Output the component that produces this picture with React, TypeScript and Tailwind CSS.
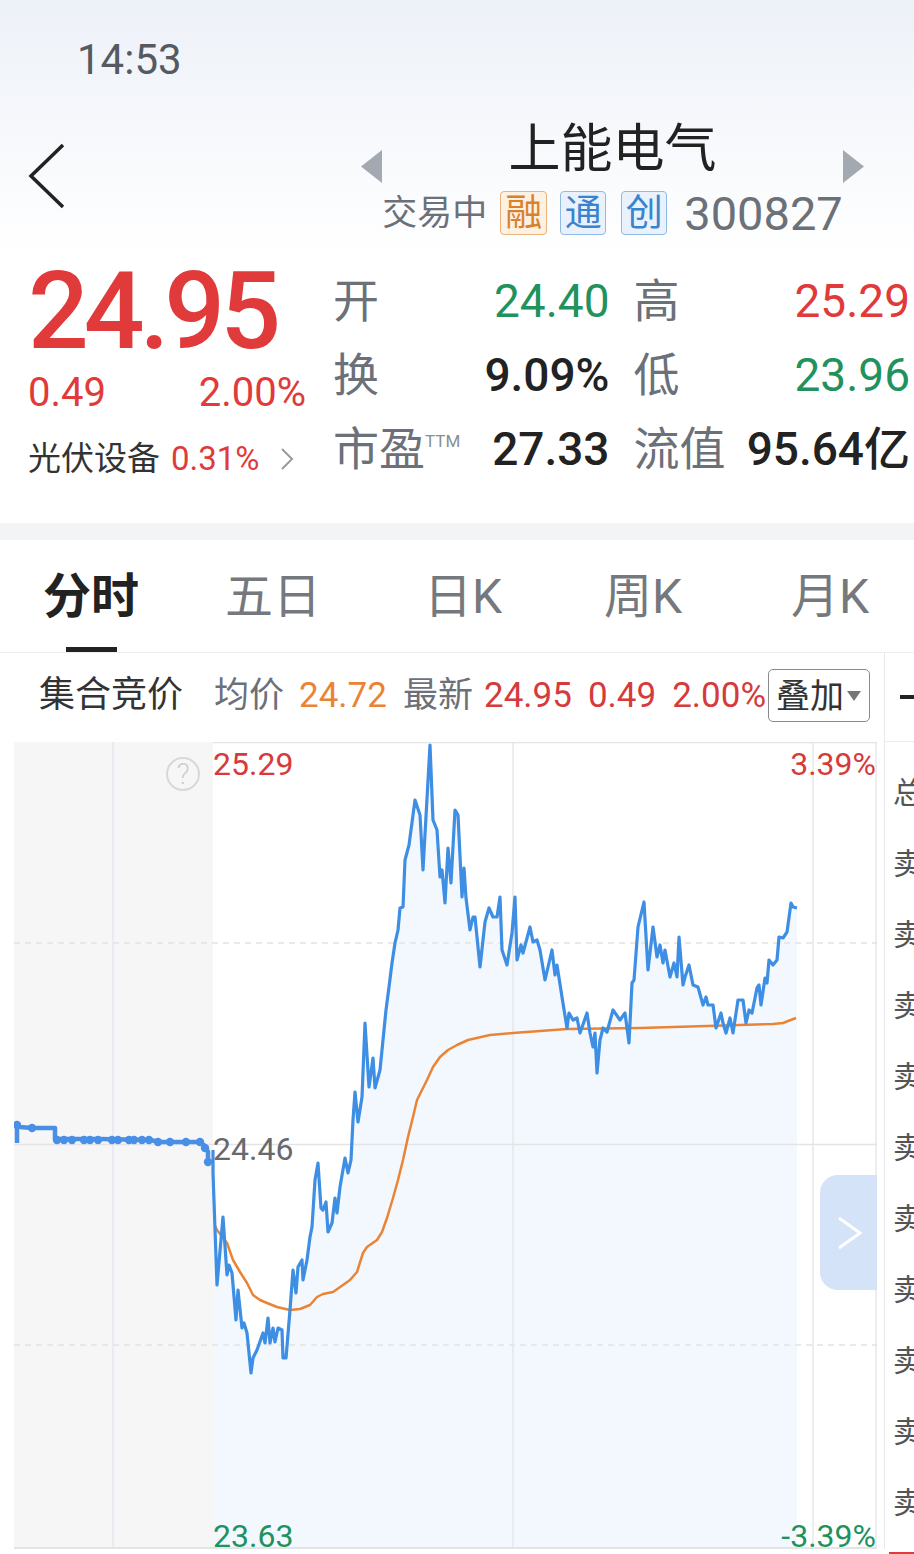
const price: [number, number][] = [
  [213, 1150], [213, 1173], [217, 1285], [223, 1217], [227, 1275], [229, 1265], [232, 1273], [236, 1320], [238, 1290],
  [242, 1328], [244, 1323], [247, 1333], [251, 1373], [253, 1358], [257, 1350], [263, 1333], [265, 1343], [268, 1318],
  [270, 1343], [273, 1328], [275, 1342], [278, 1328], [282, 1330], [283, 1358], [286, 1358], [290, 1310], [293, 1270],
  [296, 1293], [298, 1267], [302, 1260], [303, 1280], [307, 1260], [310, 1237], [312, 1227], [315, 1180], [318, 1163],
  [321, 1208], [323, 1210], [326, 1202], [328, 1232], [332, 1223], [335, 1198], [337, 1213], [340, 1187], [345, 1158],
  [348, 1173], [351, 1160], [353, 1120], [355, 1092], [358, 1122], [362, 1097], [365, 1023], [369, 1087], [373, 1058],
  [375, 1088], [380, 1070], [383, 1040], [386, 1010], [389, 987], [392, 963], [395, 943], [398, 930], [400, 908],
  [403, 907], [405, 860], [409, 845], [415, 800], [420, 815], [423, 870], [430, 745], [433, 820], [437, 830], [440, 877],
  [442, 870], [445, 903], [448, 848], [451, 883], [455, 810], [458, 815], [462, 897], [464, 868], [466, 898], [470, 930],
  [473, 917], [475, 917], [480, 967], [485, 922], [489, 908], [493, 917], [497, 917], [500, 897], [502, 950], [507, 965],
  [512, 933], [515, 897], [517, 960], [521, 945], [523, 953], [530, 927], [533, 942], [537, 940], [540, 950], [545, 980],
  [552, 950], [555, 975], [557, 965], [562, 997], [567, 1028], [569, 1013], [573, 1020], [577, 1018], [580, 1033],
  [587, 1013], [590, 1033], [593, 1047], [595, 1033], [597, 1073], [600, 1040], [603, 1028], [607, 1032], [613, 1010],
  [620, 1020], [625, 1013], [629, 1043], [632, 983], [634, 980], [638, 927], [644, 902], [648, 970], [653, 927],
  [657, 957], [660, 945], [663, 963], [665, 950], [670, 977], [674, 963], [677, 977], [679, 937], [683, 985], [685, 977],
  [689, 965], [693, 985], [698, 987], [703, 1005], [706, 997], [708, 1005], [713, 1005], [716, 1028], [721, 1013],
  [723, 1023], [726, 1033], [730, 1018], [733, 1033], [738, 1000], [743, 1000], [746, 1023], [749, 1010], [752, 1013],
  [757, 988], [759, 985], [761, 1005], [765, 978], [767, 983], [769, 960], [773, 965], [777, 960], [779, 937], [783, 938],
  [787, 932], [791, 903], [793, 907], [797, 908],
];

const avg: [number, number][] = [
  [215, 1226], [217, 1230], [227, 1243], [233, 1260], [240, 1272], [247, 1283], [253, 1295], [260, 1300], [267, 1303],
  [277, 1307], [290, 1310], [300, 1309], [310, 1305], [317, 1297], [323, 1294], [333, 1292], [343, 1285], [350, 1280],
  [357, 1272], [363, 1253], [367, 1247], [377, 1240], [382, 1232], [387, 1218], [393, 1198], [398, 1180], [403, 1160],
  [408, 1137], [413, 1117], [417, 1100], [422, 1090], [427, 1080], [433, 1067], [440, 1057], [448, 1050], [457, 1045],
  [468, 1040], [490, 1035], [513, 1033], [540, 1031], [567, 1029], [640, 1028], [707, 1026], [773, 1024], [783, 1023],
  [796, 1018],
];

const pre: [number, number][] = [
  [17, 1143], [17, 1125], [20, 1127], [32, 1128], [55, 1128], [55, 1139], [100, 1139], [150, 1140], [160, 1142],
  [200, 1142], [205, 1146], [208, 1152], [208, 1163],
];

const preDots: [number, number][] = [
  [17, 1125], [32, 1128], [57, 1140], [64, 1140], [72, 1140], [84, 1140], [90, 1140], [98, 1140], [112, 1140],
  [118, 1140], [129, 1140], [134, 1140], [142, 1140], [149, 1140], [158, 1142], [170, 1142], [186, 1142], [200, 1142],
  [205, 1148], [208, 1162],
];

const pts = (a: [number, number][]) => a.map((p) => p.join(",")).join(" ");

const FONT = { fontFamily: "Roboto, 'Noto Sans CJK SC', sans-serif" };

function Chart() {
  return (
    <div className="relative ml-[14px] w-[863px] h-[807px]">
      <svg width="863" height="807" viewBox="14 742 863 807" className="block">
        <rect x="14" y="742" width="199" height="806" fill="#f6f6f7" />
        <line x1="113" y1="742" x2="113" y2="1548" stroke="#e3e7f0" strokeWidth="1.5" />
        <polygon points={pts([...price, [797, 1548], [213, 1548]])} fill="#f3f8fe" />
        <line x1="213" y1="742.5" x2="877" y2="742.5" stroke="#e4e4e4" strokeWidth="1.5" />
        <line x1="513" y1="742" x2="513" y2="1548" stroke="#e6e8e8" strokeWidth="1.5" />
        <line x1="813" y1="742" x2="813" y2="1548" stroke="#e6e8e8" strokeWidth="1.5" />
        <line x1="876" y1="742" x2="876" y2="1548" stroke="#e6e8e8" strokeWidth="1.5" />
        <line x1="14" y1="943" x2="877" y2="943" stroke="#e2e2e2" strokeWidth="1.5" strokeDasharray="6 5" />
        <line x1="14" y1="1345" x2="877" y2="1345" stroke="#e2e2e2" strokeWidth="1.5" strokeDasharray="6 5" />
        <line x1="14" y1="1144.5" x2="877" y2="1144.5" stroke="#e4e4e4" strokeWidth="1.5" />
        <line x1="14" y1="1548" x2="877" y2="1548" stroke="#e4e4e4" strokeWidth="2" />
        <polyline points={pts(avg)} fill="none" stroke="#ea8434" strokeWidth="2.5" strokeLinejoin="round" />
        <polyline points={pts(price)} fill="none" stroke="#3e8ee4" strokeWidth="3.2" strokeLinejoin="round" />
        <polyline points={pts(pre)} fill="none" stroke="#4a8fe6" strokeWidth="4.5" strokeLinejoin="round" />
        {preDots.map(([x, y], i) => (
          <circle key={i} cx={x} cy={y} r="4.2" fill="#4a8fe6" />
        ))}
      </svg>
      <div className="absolute left-[152px] top-[15px] w-[34px] h-[34px] rounded-full border-2 border-[#d8d8d8] flex items-center justify-center text-[29px] leading-[29px] font-light text-[#cfcfcf]">
        ?
      </div>
      <span className="absolute left-[199px] top-[6px] text-[32px] leading-[32px] text-[#d63a3a]">25.29</span>
      <span className="absolute right-[1px] top-[6px] text-[32px] leading-[32px] text-[#d63a3a]">3.39%</span>
      <span className="absolute left-[199px] top-[391px] text-[32px] leading-[32px] text-[#666a6e]">24.46</span>
      <span className="absolute left-[199px] top-[781px] text-[32px] leading-[26px] text-[#21915e]">23.63</span>
      <span className="absolute right-[1px] top-[781px] text-[32px] leading-[26px] text-[#21915e]">-3.39%</span>
      <div className="absolute left-[806px] top-[433px] w-[57px] h-[115px] rounded-l-[18px] bg-[#d5e3f8] flex items-center justify-center">
        <svg width="28" height="34" viewBox="0 0 28 34">
          <path d="M4 2 L25 17 L4 32" fill="none" stroke="#fff" strokeWidth="3" />
        </svg>
      </div>
    </div>
  );
}

const sideRows = ["总", "卖", "卖", "卖", "卖", "卖", "卖", "卖", "卖", "卖", "卖"];

export default function App() {
  return (
    <div className="w-[914px] h-[1554px] overflow-hidden bg-white relative" style={FONT}>
      {/* header */}
      <div className="h-[255px] bg-gradient-to-b from-[#edf1f8] to-white">
        <div className="h-[120px] flex items-center pl-[77px]">
          <span className="text-[42px] leading-[42px] text-[#555a60]">14:53</span>
        </div>
        <div className="flex h-[135px]">
          <div className="w-[361px] pl-[27px] pt-[23px]">
            <svg width="40" height="66" viewBox="0 0 40 66">
              <path d="M36 2 L4 33 L36 64" fill="none" stroke="#222" strokeWidth="3.5" />
            </svg>
          </div>
          <div className="w-[21px] pt-[30px]">
            <svg width="21" height="33" viewBox="0 0 21 33">
              <path d="M21 0 L0 16.5 L21 33Z" fill="#a3a9b1" />
            </svg>
          </div>
          <div className="w-[461px] flex flex-col items-center">
            <div className="mt-[4px] text-[52px] leading-[52px] text-[#222]">上能电气</div>
            <div className="mt-[15px] h-[44px] flex items-center">
              <span className="text-[35px] leading-[35px] text-[#6b7079]">交易中</span>
              <span className="ml-[13px] w-[47px] h-[44px] rounded-[4px] border border-[#ebb27a] bg-[#fdf1e3] text-[#d9822b] text-[37px] leading-[37px] flex items-center justify-center">融</span>
              <span className="ml-[13px] w-[46px] h-[44px] rounded-[4px] border border-[#8dbbe6] bg-[#e9f2fc] text-[#3a84cf] text-[37px] leading-[37px] flex items-center justify-center">通</span>
              <span className="ml-[15px] w-[46px] h-[44px] rounded-[4px] border border-[#8dbbe6] bg-[#e9f2fc] text-[#3a84cf] text-[37px] leading-[37px] flex items-center justify-center">创</span>
              <span className="ml-[17px] text-[47px] leading-[47px] text-[#6b7079]">300827</span>
            </div>
          </div>
          <div className="w-[21px] pt-[30px]">
            <svg width="21" height="33" viewBox="0 0 21 33">
              <path d="M0 0 L21 16.5 L0 33Z" fill="#a3a9b1" />
            </svg>
          </div>
        </div>
      </div>

      {/* quote */}
      <div className="h-[268px] flex">
        <div className="w-[333px] pl-[28px]">
          <div className="pt-[9px] text-[107px] leading-[96px] font-medium tracking-[-5px] text-[#e03a3a]">24.95</div>
          <div className="mt-[13px] w-[278px] flex justify-between text-[40px] leading-[40px] text-[#e03a3a]">
            <span>0.49</span>
            <span>2.00%</span>
          </div>
          <div className="mt-[29px] flex items-center text-[33px] leading-[33px]">
            <span className="text-[#333]">光伏设备</span>
            <span className="ml-[11px] text-[#e03a3a]">0.31%</span>
            <svg className="ml-[20px]" width="14" height="24" viewBox="0 0 14 24">
              <path d="M2 2 L12 12 L2 22" fill="none" stroke="#9a9a9a" strokeWidth="2" />
            </svg>
          </div>
        </div>
        <div className="w-[577px] pt-[9px] grid grid-cols-2 gap-x-[24px] auto-rows-[74px] text-[46px] leading-[46px]">
          <div className="flex items-center justify-between">
            <span className="text-[#6b7079]">开</span>
            <span className="text-[#21915e]">24.40</span>
          </div>
          <div className="flex items-center justify-between">
            <span className="text-[#6b7079]">高</span>
            <span className="text-[#e03a3a]">25.29</span>
          </div>
          <div className="flex items-center justify-between">
            <span className="text-[#6b7079]">换</span>
            <span className="text-[#222] font-medium">9.09%</span>
          </div>
          <div className="flex items-center justify-between">
            <span className="text-[#6b7079]">低</span>
            <span className="text-[#21915e]">23.96</span>
          </div>
          <div className="flex items-center justify-between">
            <span className="flex items-start text-[#6b7079]">
              市盈
              <span className="mt-[7px] text-[17px] leading-[17px] text-[#8a8e94]">TTM</span>
            </span>
            <span className="text-[#222] font-medium">27.33</span>
          </div>
          <div className="flex items-center justify-between">
            <span className="text-[#6b7079]">流值</span>
            <span className="text-[#222] font-medium">95.64亿</span>
          </div>
        </div>
      </div>

      <div className="h-[17px] bg-[#f3f4f6]" />

      {/* tabs */}
      <div className="h-[113px] flex items-start pt-[33px] border-b border-[#eeeeee] text-[48px] leading-[48px]">
        <div className="w-[225px] pl-[42px]">
          <div className="w-[98px] flex flex-col items-center">
            <span className="font-bold text-[#222]">分时</span>
            <span className="mt-[26px] w-[51px] h-[5px] bg-[#222]" />
          </div>
        </div>
        <div className="w-[199px] text-[#75787d]">五日</div>
        <div className="w-[180px] text-[#75787d]">日K</div>
        <div className="w-[187px] text-[#75787d]">周K</div>
        <div className="text-[#75787d]">月K</div>
      </div>

      {/* chart + side */}
      <div className="flex">
        <div className="w-[884px]">
          <div className="h-[89px] flex items-center pl-[39px] pb-[4px] text-[35px] leading-[35px] whitespace-nowrap">
            <span className="text-[36px] text-[#333]">集合竞价</span>
            <span className="ml-[31px] text-[#6b7079]">均价</span>
            <span className="ml-[15px] text-[#ea8434]">24.72</span>
            <span className="ml-[16px] text-[#6b7079]">最新</span>
            <span className="ml-[11px] text-[#d63a3a]">24.95</span>
            <span className="ml-[16px] text-[#d63a3a]">0.49</span>
            <span className="ml-[16px] text-[#d63a3a]">2.00%</span>
            <div className="ml-[2px] w-[102px] h-[53px] rounded-[5px] border-[1.5px] border-[#8a8a8a] flex items-center pl-[7px]">
              <span className="text-[34px] leading-[34px] text-[#333]">叠加</span>
              <svg className="ml-[3px]" width="14" height="12" viewBox="0 0 14 12">
                <path d="M0 1 L14 1 L7 11Z" fill="#777" />
              </svg>
            </div>
          </div>
          <Chart />
        </div>
        <div className="flex-1 border-l border-[#e8e8e8] overflow-hidden">
          <div className="h-[89px] flex items-center pl-[15px] border-b border-[#ececec]">
            <span className="w-[14px] h-[4px] bg-[#222]" />
          </div>
          <div className="pt-[15px]">
            {sideRows.map((t, i) => (
              <div key={i} className="h-[71px] flex items-center pl-[8px] text-[30px] leading-[30px] text-[#555]">
                {t}
              </div>
            ))}
          </div>
        </div>
      </div>
      <div className="absolute left-[889px] bottom-0 w-[25px] h-[2px] bg-[#e03a3a]" />
    </div>
  );
}
